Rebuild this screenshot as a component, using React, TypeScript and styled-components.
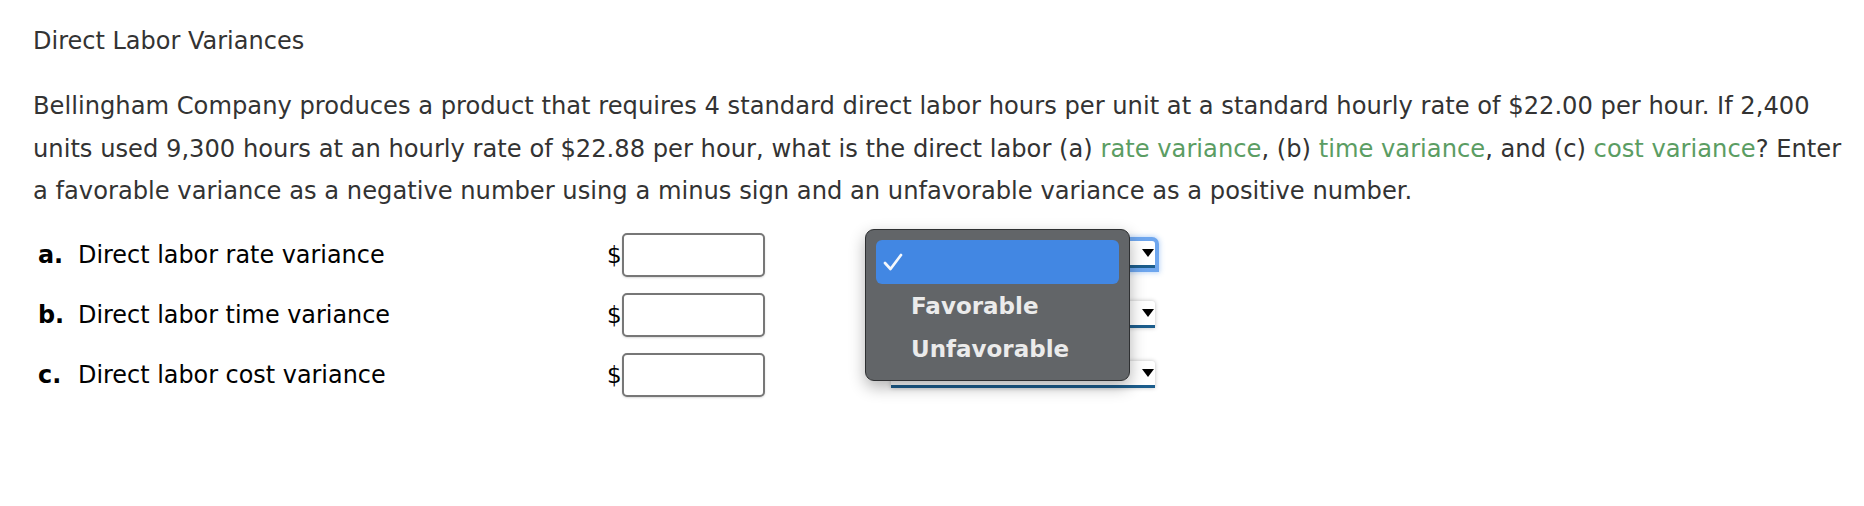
import React from "react";
import styled, { createGlobalStyle } from "styled-components";

const GlobalStyle = createGlobalStyle`
  body {
    margin: 0;
    background: #fff;
    font-family: "DejaVu Sans", Verdana, sans-serif;
  }
`;

const rows = [
  { key: "a.", label: "Direct labor rate variance", open: true },
  { key: "b.", label: "Direct labor time variance", open: false },
  { key: "c.", label: "Direct labor cost variance", open: false },
];

export default function App() {
  return (
    <>
      <GlobalStyle />
      <SPage>
        <STitle>Direct Labor Variances</STitle>
        <SQuestion>
          Bellingham Company produces a product that requires 4 standard
          direct labor hours per unit at a standard hourly rate of $22.00 per
          hour. If 2,400 units used 9,300 hours at an hourly rate of $22.88 per
          hour, what is the direct labor (a) <STerm>rate variance</STerm>, (b){" "}
          <STerm>time variance</STerm>, and (c) <STerm>cost variance</STerm>?
          Enter a favorable variance as a negative number using a minus sign
          and an unfavorable variance as a positive number.
        </SQuestion>
        <SAnswers>
          {rows.map((row) => (
            <SRow key={row.key}>
              <SLabel>
                <SLetter>{row.key}</SLetter>
                {row.label}
              </SLabel>
              <SDollar>$</SDollar>
              <SAmount type="text" />
              <SSelectWrap>
                <SSelect $focused={row.open}>
                  <SArrow />
                </SSelect>
                {row.open && (
                  <SMenu>
                    <SMenuItem $active>
                      <SCheck viewBox="0 0 20 18">
                        <path
                          d="M2 10 L7.5 16 L18 2"
                          fill="none"
                          stroke="#f4f7fc"
                          strokeWidth="2.7"
                          strokeLinecap="round"
                          strokeLinejoin="round"
                        />
                      </SCheck>
                    </SMenuItem>
                    <SMenuItem>Favorable</SMenuItem>
                    <SMenuItem>Unfavorable</SMenuItem>
                  </SMenu>
                )}
              </SSelectWrap>
            </SRow>
          ))}
        </SAnswers>
      </SPage>
    </>
  );
}

const SPage = styled.div`
  padding: 28px 0 0 33px;
  width: 1820px;
  color: #333;
`;
const STitle = styled.h1`
  margin: 0;
  font-size: 24px;
  font-weight: normal;
  line-height: 27px;
`;
const SQuestion = styled.p`
  margin: 30px 0 0;
  font-size: 24.2px;
  line-height: 42.6px;
`;
const STerm = styled.span`
  color: #5b9d63;
`;
const SAnswers = styled.div`
  margin-top: 12px;
  display: flex;
  flex-direction: column;
`;
const SRow = styled.div`
  display: flex;
  align-items: center;
  height: 60px;
  color: #000;
  font-size: 23.9px;
`;
const SLabel = styled.div`
  width: 569px;
  margin-left: 5px;
  white-space: nowrap;
`;
const SLetter = styled.span`
  display: inline-block;
  width: 40px;
  font-weight: bold;
`;
const SDollar = styled.span`
  width: 15px;
  font-size: 23px;
`;
const SAmount = styled.input`
  box-sizing: border-box;
  width: 143px;
  height: 44px;
  margin: 0;
  border: 2px solid #777;
  border-radius: 5px;
  background: #fff;
  box-shadow: 0 1px 2px rgba(0, 0, 0, 0.15);
`;
const SSelectWrap = styled.div`
  position: relative;
  margin-left: 126px;
`;
const SSelect = styled.div<{ $focused: boolean }>`
  box-sizing: border-box;
  position: relative;
  width: 264px;
  height: 27px;
  background: #fff;
  border-bottom: 3px solid #1c5d8c;
  border-radius: 3px 3px 0 0;
  box-shadow: ${(p) =>
    p.$focused
      ? "0 0 0 4px #6ea6ee, 0 0 5px 5px rgba(110, 166, 238, 0.45)"
      : "0 0 4px rgba(0, 0, 0, 0.25)"};
`;
const SArrow = styled.span`
  position: absolute;
  right: 1px;
  top: 8px;
  width: 0;
  height: 0;
  border-left: 6px solid transparent;
  border-right: 6px solid transparent;
  border-top: 8px solid #000;
`;
const SMenu = styled.div`
  position: absolute;
  left: -26px;
  top: -12px;
  box-sizing: border-box;
  width: 265px;
  padding: 10px;
  background: #626568;
  border: 1px solid #2e3032;
  border-radius: 9px;
  box-shadow: 0 6px 16px rgba(0, 0, 0, 0.3);
  z-index: 2;
`;
const SMenuItem = styled.div<{ $active?: boolean }>`
  display: flex;
  align-items: center;
  height: ${(p) => (p.$active ? "44px" : "43px")};
  padding-left: ${(p) => (p.$active ? "7px" : "35px")};
  border-radius: 6px;
  background: ${(p) => (p.$active ? "#4287e3" : "transparent")};
  color: #ebebeb;
  font-weight: bold;
  font-size: 23px;
`;
const SCheck = styled.svg`
  width: 20px;
  height: 18px;
`;
